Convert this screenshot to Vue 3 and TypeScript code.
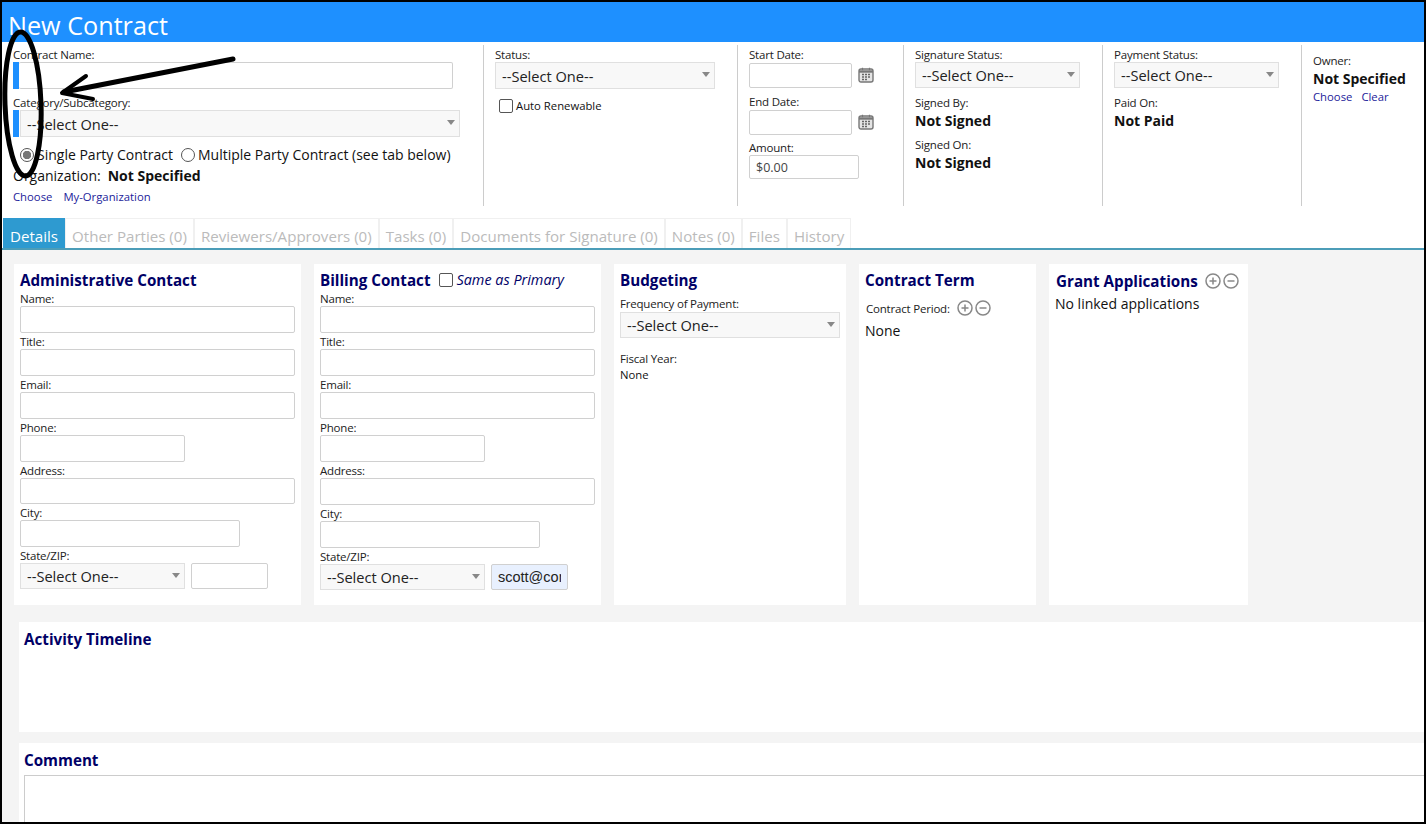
<script setup lang="ts">
type Field = { label: string; size: 'full' | 'mid' | 'short' }

const contactFields: Field[] = [
  { label: 'Name:', size: 'full' },
  { label: 'Title:', size: 'full' },
  { label: 'Email:', size: 'full' },
  { label: 'Phone:', size: 'short' },
  { label: 'Address:', size: 'full' },
  { label: 'City:', size: 'mid' },
]

const tabs = [
  'Other Parties (0)',
  'Reviewers/Approvers (0)',
  'Tasks (0)',
  'Documents for Signature (0)',
  'Notes (0)',
  'Files',
  'History',
]
</script>

<template>
  <div class="page">
    <header class="title-bar">New Contract</header>

    <section class="summary">
      <div class="col col-main">
        <label class="lbl">Contract Name:</label>
        <div class="required name-box"><input type="text" class="input" /></div>
        <label class="lbl cat-lbl">Category/Subcategory:</label>
        <div class="required cat-box">
          <div class="select-wrap"><select class="select"><option>--Select One--</option></select></div>
        </div>
        <div class="radio-row">
          <label class="radio-item"><input type="radio" name="party" class="radio" checked />Single Party Contract</label>
          <label class="radio-item"><input type="radio" name="party" class="radio" />Multiple Party Contract (see tab below)</label>
        </div>
        <div class="org-row"><span>Organization:</span><strong>Not Specified</strong></div>
        <div class="links"><a>Choose</a><a>My-Organization</a></div>
      </div>

      <div class="col col-status">
        <label class="lbl">Status:</label>
        <div class="select-wrap status-select"><select class="select"><option>--Select One--</option></select></div>
        <label class="check-row"><input type="checkbox" class="check" />Auto Renewable</label>
      </div>

      <div class="col col-dates">
        <label class="lbl">Start Date:</label>
        <div class="date-row">
          <input type="text" class="input date-input" />
          <svg class="cal" viewBox="0 0 16 16" width="16" height="16">
            <rect x="1" y="2" width="14" height="13" rx="2" fill="#e4e4e4" stroke="#777" stroke-width="1.4" />
            <path d="M1 4.500h14" stroke="#777" stroke-width="2.400" />
            <path d="M4.500 .8v2.400M11.500 .8v2.400" stroke="#777" stroke-width="1.200" />
            <path d="M4 7.500h2M7 7.500h2M10 7.500h2M4 10h2M7 10h2M10 10h2M4 12.500h2M7 12.500h2" stroke="#666" stroke-width="1.400" />
          </svg>
        </div>
        <label class="lbl end-lbl">End Date:</label>
        <div class="date-row">
          <input type="text" class="input date-input" />
          <svg class="cal" viewBox="0 0 16 16" width="16" height="16">
            <rect x="1" y="2" width="14" height="13" rx="2" fill="#e4e4e4" stroke="#777" stroke-width="1.4" />
            <path d="M1 4.500h14" stroke="#777" stroke-width="2.400" />
            <path d="M4.500 .8v2.400M11.500 .8v2.400" stroke="#777" stroke-width="1.200" />
            <path d="M4 7.500h2M7 7.500h2M10 7.500h2M4 10h2M7 10h2M10 10h2M4 12.500h2M7 12.500h2" stroke="#666" stroke-width="1.400" />
          </svg>
        </div>
        <label class="lbl amount-lbl">Amount:</label>
        <input type="text" class="input amount" value="$0.00" />
      </div>

      <div class="col col-sign">
        <label class="lbl">Signature Status:</label>
        <div class="select-wrap sign-select"><select class="select"><option>--Select One--</option></select></div>
        <label class="lbl signed-lbl">Signed By:</label>
        <strong class="val">Not Signed</strong>
        <label class="lbl signed-lbl second">Signed On:</label>
        <strong class="val">Not Signed</strong>
      </div>

      <div class="col col-pay">
        <label class="lbl">Payment Status:</label>
        <div class="select-wrap sign-select"><select class="select"><option>--Select One--</option></select></div>
        <label class="lbl signed-lbl">Paid On:</label>
        <strong class="val">Not Paid</strong>
      </div>

      <div class="col col-owner">
        <label class="lbl owner-lbl">Owner:</label>
        <strong class="val owner-val">Not Specified</strong>
        <div class="links owner-links"><a>Choose</a><a>Clear</a></div>
      </div>
    </section>

    <nav class="tabs">
      <span class="tab active">Details</span>
      <span v-for="tab in tabs" :key="tab" class="tab">{{ tab }}</span>
    </nav>

    <main class="content">
      <div class="cards">
        <section class="card card-contact admin">
          <h3 class="card-title">Administrative Contact</h3>
          <div v-for="f in contactFields" :key="f.label" class="field">
            <label class="lbl">{{ f.label }}</label>
            <input type="text" class="input" :class="f.size" />
          </div>
          <div class="field">
            <label class="lbl">State/ZIP:</label>
            <div class="state-row">
              <div class="select-wrap short"><select class="select"><option>--Select One--</option></select></div>
              <input type="text" class="input zip" />
            </div>
          </div>
        </section>

        <section class="card card-contact">
          <h3 class="card-title">Billing Contact
            <label class="same"><input type="checkbox" class="check" />Same as Primary</label>
          </h3>
          <div v-for="f in contactFields" :key="f.label" class="field">
            <label class="lbl">{{ f.label }}</label>
            <input type="text" class="input" :class="f.size" />
          </div>
          <div class="field">
            <label class="lbl">State/ZIP:</label>
            <div class="state-row">
              <div class="select-wrap short"><select class="select"><option>--Select One--</option></select></div>
              <input type="text" class="input zip autofill" value="scott@company.com" />
            </div>
          </div>
        </section>

        <section class="card card-budget">
          <h3 class="card-title">Budgeting</h3>
          <label class="lbl freq-lbl">Frequency of Payment:</label>
          <div class="select-wrap budget-select"><select class="select"><option>--Select One--</option></select></div>
          <label class="lbl fiscal-lbl">Fiscal Year:</label>
          <div class="small-val">None</div>
        </section>

        <section class="card card-term">
          <h3 class="card-title">Contract Term</h3>
          <div class="period-row">
            <label class="lbl">Contract Period:</label>
            <span class="icons">
              <svg viewBox="0 0 16 16" width="16" height="16"><circle cx="8" cy="8" r="7" fill="none" stroke="#888" stroke-width="1.500" /><path d="M4.500 8h7M8 4.500v7" stroke="#888" stroke-width="1.500" /></svg>
              <svg viewBox="0 0 16 16" width="16" height="16"><circle cx="8" cy="8" r="7" fill="none" stroke="#888" stroke-width="1.500" /><path d="M4.500 8h7" stroke="#888" stroke-width="1.500" /></svg>
            </span>
          </div>
          <div class="term-val">None</div>
        </section>

        <section class="card card-grant">
          <h3 class="card-title grant-title">Grant Applications
            <span class="icons">
              <svg viewBox="0 0 16 16" width="16" height="16"><circle cx="8" cy="8" r="7" fill="none" stroke="#888" stroke-width="1.500" /><path d="M4.500 8h7M8 4.500v7" stroke="#888" stroke-width="1.500" /></svg>
              <svg viewBox="0 0 16 16" width="16" height="16"><circle cx="8" cy="8" r="7" fill="none" stroke="#888" stroke-width="1.500" /><path d="M4.500 8h7" stroke="#888" stroke-width="1.500" /></svg>
            </span>
          </h3>
          <div class="no-linked">No linked applications</div>
        </section>
      </div>

      <section class="wide timeline">
        <h3 class="card-title">Activity Timeline</h3>
      </section>

      <section class="wide comment">
        <h3 class="card-title">Comment</h3>
        <textarea class="comment-box"></textarea>
      </section>
    </main>

    <!-- hand drawn annotation on top of the screenshot -->
    <svg class="markup" width="260" height="190" viewBox="0 0 260 190">
      <ellipse cx="23" cy="104" rx="18" ry="72" fill="none" stroke="#000" stroke-width="5" transform="rotate(-2 23 104)" />
      <path d="M233 59L64 92" fill="none" stroke="#000" stroke-width="5" stroke-linecap="round" />
      <path d="M86 76L62 93L93 99" fill="none" stroke="#000" stroke-width="4" stroke-linecap="round" stroke-linejoin="round" />
    </svg>
  </div>
</template>

<style>
html,
body {
  margin: 0;
  height: 824px;
  overflow: hidden;
  background: #fff;
}
</style>

<style scoped>
.page {
  position: relative;
  box-sizing: border-box;
  width: 1426px;
  height: 824px;
  overflow: hidden;
  border: 2px solid #000;
  background: #fff;
  color: #111;
  font-family: "Open Sans", "Noto Sans", sans-serif;
  font-size: 14px;
}

.title-bar {
  height: 40px;
  padding-left: 6px;
  background: #1e90ff;
  color: #fff;
  font-size: 25.200px;
  line-height: 46px;
}

.summary {
  display: flex;
  height: 176px;
  box-sizing: border-box;
  padding-top: 3px;
}

.col {
  display: flex;
  flex-direction: column;
  align-items: flex-start;
  box-sizing: border-box;
  height: 161px;
  padding-top: 3px;
  padding-left: 11px;
  border-right: 1px solid #ccc;
}

.col-main { width: 482px; }
.col-status { width: 254px; }
.col-dates { width: 166px; }
.col-sign { width: 199px; }
.col-pay { width: 199px; }
.col-owner { flex: 1; border-right: none; }

.lbl {
  display: block;
  height: 14px;
  color: #222;
  font-size: 11.500px;
  line-height: 14px;
  letter-spacing: -0.2px;
  white-space: nowrap;
}

.input {
  display: block;
  box-sizing: border-box;
  width: 100%;
  height: 27px;
  margin: 0;
  padding: 0 6px;
  border: 1px solid #d0d0d0;
  border-radius: 2px;
  background: #fff;
  color: #444;
  font-family: inherit;
  font-size: 12.500px;
  outline: none;
}

.select-wrap {
  position: relative;
  width: 100%;
  height: 27px;
}

.select-wrap::after {
  content: "";
  position: absolute;
  top: 10px;
  right: 5px;
  border-left: 4px solid transparent;
  border-right: 4px solid transparent;
  border-top: 5px solid #888;
}

.select {
  display: block;
  appearance: none;
  box-sizing: border-box;
  width: 100%;
  height: 100%;
  margin: 0;
  padding: 0 6px;
  border: 1px solid #e0e0e0;
  border-radius: 0;
  background: #f8f8f8;
  color: #222;
  font-family: inherit;
  font-size: 14.600px;
  outline: none;
}

.required {
  display: flex;
  box-sizing: border-box;
  width: 440px;
  margin-top: 0;
  border-left: 6px solid #1e90ff;
}

.name-box .input {
  border-left: none;
}

.cat-lbl { margin-top: 7px; }

.cat-box {
  width: 447px;
}

.cat-box .select-wrap {
  margin-left: 1px;
}

.radio-row {
  display: flex;
  gap: 8px;
  margin-top: 8px;
  margin-left: 7px;
  font-size: 14px;
  line-height: 20px;
}

.radio-item {
  display: flex;
  align-items: center;
  gap: 3px;
}

.radio {
  appearance: none;
  box-sizing: border-box;
  width: 14px;
  height: 14px;
  margin: 0;
  border: 1px solid #555;
  border-radius: 50%;
  background: #fff;
}

.radio:checked {
  background: radial-gradient(circle, #777 0 4px, #fff 4.500px);
}

.org-row {
  display: flex;
  gap: 7px;
  margin-top: 1px;
  font-size: 14px;
  line-height: 20px;
}

.org-row strong { font-weight: 700; }

.links {
  display: flex;
  gap: 11px;
  margin-top: 3px;
  color: #22229a;
  font-size: 11.300px;
  line-height: 16px;
}

.status-select { width: 220px; }

.check {
  appearance: none;
  box-sizing: border-box;
  width: 14px;
  height: 14px;
  margin: 0;
  border: 1px solid #555;
  border-radius: 2px;
  background: #fff;
}

.check-row {
  display: flex;
  align-items: center;
  gap: 3px;
  margin-top: 9px;
  margin-left: 4px;
  font-size: 11.300px;
  line-height: 16px;
}

.date-row {
  display: flex;
  align-items: center;
  gap: 6px;
  height: 26px;
}

.date-input {
  width: 103px;
  height: 25px;
}

.end-lbl { margin-top: 7px; }
.amount-lbl { margin-top: 6px; }

.amount {
  width: 110px;
  height: 24px;
}

.sign-select {
  width: 165px;
  height: 26px;
}

.signed-lbl { margin-top: 8px; }
.signed-lbl.second { margin-top: 7px; }

.val {
  margin-top: 1px;
  color: #111;
  font-size: 14px;
  font-weight: 700;
  line-height: 20px;
}

.owner-lbl { margin-top: 6px; }
.owner-val { margin-top: 1px; }
.owner-links { margin-top: 0; gap: 9px; }

.tabs {
  display: flex;
  height: 32px;
  box-sizing: border-box;
  padding-left: 1px;
  border-bottom: 2px solid #4c9db8;
}

.tab {
  box-sizing: border-box;
  height: 30px;
  padding: 0 6px;
  border: 1px solid #f0f0f0;
  border-bottom: none;
  color: #bbb;
  font-size: 15.100px;
  line-height: 34px;
  white-space: nowrap;
}

.tab.active {
  border-color: #2e9ad0;
  background: #2e9ad0;
  color: #fff;
}

.content {
  height: 572px;
  padding: 14px 0 0 12px;
  background: #f4f4f4;
}

.cards {
  display: flex;
  gap: 13px;
  height: 341px;
}

.card {
  box-sizing: border-box;
  background: #fff;
}

.card-contact {
  width: 287px;
  padding: 7px 6px 0;
}

.card-budget {
  width: 232px;
  padding: 7px 6px 0;
}

.card-term {
  width: 177px;
  padding: 7px 6px 0;
}

.card-grant {
  width: 199px;
  padding: 7px 6px 0;
}

.card-title {
  display: flex;
  align-items: center;
  box-sizing: border-box;
  height: 20px;
  margin: 0;
  padding-bottom: 2px;
  color: #000066;
  font-size: 15.200px;
  font-weight: 700;
  line-height: 20px;
  white-space: nowrap;
}

.same {
  display: flex;
  align-items: center;
  gap: 3px;
  margin-left: 9px;
  color: #000066;
  font-size: 14.400px;
  font-style: italic;
  font-weight: 400;
}

.field {
  margin-top: 2px;
}

.card-title + .field {
  margin-top: 1px;
}

.field .lbl {
  height: 14px;
}

.admin .field:nth-of-type(5) .input {
  height: 26px;
}

.short { width: 165px; }
.mid { width: 220px; }

.state-row {
  display: flex;
  gap: 6px;
  height: 26px;
}

.state-row .select-wrap,
.state-row .input {
  height: 26px;
}

.zip {
  width: 77px;
}

.autofill {
  background: #e8f0fe;
  color: #222;
  font-family: "Liberation Sans", Arial, sans-serif;
  font-size: 14.500px;
}

.freq-lbl { margin-top: 6px; height: 15px; }
.budget-select { height: 26px; }
.fiscal-lbl { margin-top: 14px; }

.small-val {
  margin-top: 2px;
  font-size: 11.300px;
  line-height: 14px;
}

.period-row {
  display: flex;
  align-items: center;
  gap: 7px;
  margin-top: 9px;
  margin-left: 1px;
}

.period-row .lbl {
  position: relative;
  top: 1px;
}

.icons {
  display: inline-flex;
  gap: 2px;
}

.term-val {
  margin-top: 5px;
  font-size: 14px;
  line-height: 20px;
}

.grant-title {
  gap: 7px;
  margin-top: 1px;
  margin-left: 1px;
}

.no-linked {
  margin-top: 2px;
  font-size: 14px;
  line-height: 20px;
}

.wide {
  box-sizing: border-box;
  background: #fff;
  margin-left: 5px;
  padding: 8px 0 0 5px;
}

.timeline {
  height: 110px;
  margin-top: 17px;
}

.comment {
  height: 90px;
  margin-top: 11px;
}

.comment-box {
  display: block;
  box-sizing: border-box;
  width: calc(100% + 10px);
  height: 60px;
  margin: 4px 0 0;
  border: 1px solid #ccc;
  background: #fff;
  outline: none;
  resize: none;
}

.markup {
  position: absolute;
  top: -2px;
  left: -2px;
  pointer-events: none;
}
</style>
